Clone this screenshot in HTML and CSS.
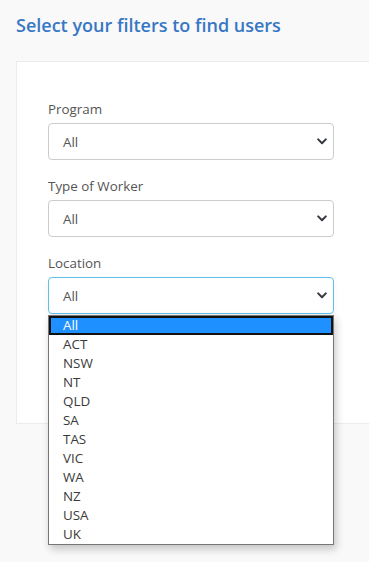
FILE: index.html
```html
<!DOCTYPE html>
<html lang="en">

<head>
    <meta charset="UTF-8">
    <meta name="viewport" content="width=device-width, initial-scale=1.0">
    <title>Find users</title>
    <link rel="stylesheet" href="styles.css">
</head>

<body>
    <div class="page">
        <h2 class="title">Select your filters to find users</h2>
        <div class="card">
            <div class="field">
                <label>Program</label>
                <div class="select">
                    <span>All</span>
                    <svg class="chevron" width="10" height="7" viewBox="0 0 10 7"><path d="M1.2 1.4 5 5.2 8.8 1.4" fill="none" stroke="#343a40" stroke-width="2" stroke-linecap="round" stroke-linejoin="round"/></svg>
                </div>
            </div>
            <div class="field">
                <label>Type of Worker</label>
                <div class="select">
                    <span>All</span>
                    <svg class="chevron" width="10" height="7" viewBox="0 0 10 7"><path d="M1.2 1.4 5 5.2 8.8 1.4" fill="none" stroke="#343a40" stroke-width="2" stroke-linecap="round" stroke-linejoin="round"/></svg>
                </div>
            </div>
            <div class="field open">
                <label>Location</label>
                <div class="select focus">
                    <span>All</span>
                    <svg class="chevron" width="10" height="7" viewBox="0 0 10 7"><path d="M1.2 1.4 5 5.2 8.8 1.4" fill="none" stroke="#343a40" stroke-width="2" stroke-linecap="round" stroke-linejoin="round"/></svg>
                </div>
                <ul class="dropdown">
                    <li class="active">All</li>
                    <li>ACT</li>
                    <li>NSW</li>
                    <li>NT</li>
                    <li>QLD</li>
                    <li>SA</li>
                    <li>TAS</li>
                    <li>VIC</li>
                    <li>WA</li>
                    <li>NZ</li>
                    <li>USA</li>
                    <li>UK</li>
                </ul>
            </div>
        </div>
    </div>
</body>

</html>
```

FILE: styles.css
```css
html,
body {
    height: 100%;
}

body {
    margin: 0;
    background-color: #f9f9f9;
    font-family: "Open Sans", sans-serif;
}

.page {
    box-sizing: border-box;
    min-height: 100%;
    padding: 13px 0 0 16px;
}

.title {
    margin: 0 0 24px;
    font-size: 18px;
    font-weight: 600;
    line-height: 24px;
    color: #3777c4;
}

.card {
    box-sizing: border-box;
    height: 363px;
    background-color: #fff;
    border: 1px solid #ececec;
    border-right: 0;
    padding: 38px 0 0 31px;
}

.field {
    position: relative;
    width: 286px;
    margin-bottom: 17px;
}

.field label {
    display: block;
    font-size: 13.4px;
    line-height: 18px;
    color: #555;
    margin-bottom: 5px;
}

.select {
    display: flex;
    align-items: center;
    justify-content: space-between;
    box-sizing: border-box;
    height: 37px;
    padding: 0 6px 0 14px;
    border: 1px solid #ccc;
    border-radius: 4px;
    font-size: 13.4px;
    color: #555;
}

.select.focus {
    border-color: #5fc1ea;
    box-shadow: 0 3px 6px rgba(0, 0, 0, 0.06);
}

.dropdown {
    position: absolute;
    z-index: 2;
    top: 61px;
    left: 0;
    width: 286px;
    box-sizing: border-box;
    margin: 0;
    padding: 0;
    list-style: none;
    background-color: #fff;
    border: 1px solid #767676;
    box-shadow: 2px 4px 8px rgba(0, 0, 0, 0.22);
}

.dropdown li {
    height: 19px;
    line-height: 19px;
    padding-left: 14px;
    font-size: 13.4px;
    color: #3a3a3a;
}

.dropdown li.active {
    background-color: #1e90ff;
    color: #fff;
    box-shadow: inset 0 0 0 2px #111;
}
```
